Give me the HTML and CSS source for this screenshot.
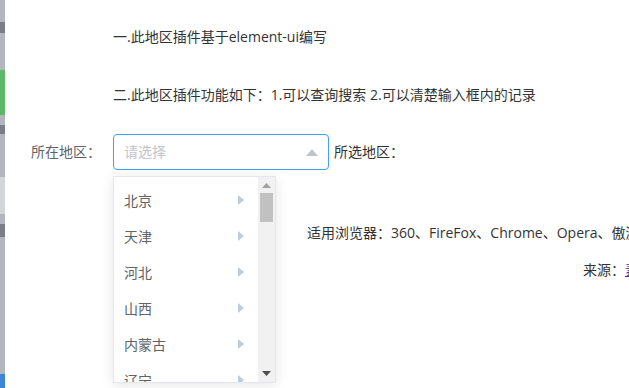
FILE: index.html
```html
<!DOCTYPE html>
<html lang="zh-CN">
<head>
<meta charset="utf-8">
<title>地区选择</title>
<link rel="stylesheet" href="styles.css">
</head>
<body>
<div class="screen">
  <div class="strip">
    <div class="seg seg-gray s1"></div>
    <div class="seg seg-dark s2"></div>
    <div class="seg seg-gray s3"></div>
    <div class="seg seg-green s4"></div>
    <div class="seg seg-gray s5"></div>
    <div class="seg seg-dark s6"></div>
    <div class="seg seg-gray s7"></div>
    <div class="seg seg-light s8"></div>
    <div class="seg seg-gray s9"></div>
    <div class="seg seg-dark s10"></div>
    <div class="seg seg-gray s11"></div>
    <div class="seg seg-blue s12"></div>
  </div>
  <main class="page">
    <p class="intro intro-first">一.此地区插件基于element-ui编写</p>
    <p class="intro intro-second">二.此地区插件功能如下：1.可以查询搜索 2.可以清楚输入框内的记录</p>
    <div class="form-row">
      <label class="label">所在地区：</label>
      <div class="select">
        <div class="input">
          <span class="placeholder">请选择</span>
          <svg class="caret-top" width="12" height="7" viewBox="0 0 12 7"><path d="M0 7 L6 0 L12 7 Z" fill="#c0c4cc"/></svg>
        </div>
        <div class="dropdown">
          <ul class="menu">
            <li class="item"><span>北京</span><svg class="caret-right" width="6" height="10" viewBox="0 0 6 10"><path d="M0 0 L6 5 L0 10 Z" fill="#c0ccda"/></svg></li>
            <li class="item"><span>天津</span><svg class="caret-right" width="6" height="10" viewBox="0 0 6 10"><path d="M0 0 L6 5 L0 10 Z" fill="#c0ccda"/></svg></li>
            <li class="item"><span>河北</span><svg class="caret-right" width="6" height="10" viewBox="0 0 6 10"><path d="M0 0 L6 5 L0 10 Z" fill="#c0ccda"/></svg></li>
            <li class="item"><span>山西</span><svg class="caret-right" width="6" height="10" viewBox="0 0 6 10"><path d="M0 0 L6 5 L0 10 Z" fill="#c0ccda"/></svg></li>
            <li class="item"><span>内蒙古</span><svg class="caret-right" width="6" height="10" viewBox="0 0 6 10"><path d="M0 0 L6 5 L0 10 Z" fill="#c0ccda"/></svg></li>
            <li class="item"><span>辽宁</span><svg class="caret-right" width="6" height="10" viewBox="0 0 6 10"><path d="M0 0 L6 5 L0 10 Z" fill="#c0ccda"/></svg></li>
          </ul>
          <div class="scrollbar">
            <svg class="sb-arrow" width="9" height="5" viewBox="0 0 9 5"><path d="M0 5 L4.5 0 L9 5 Z" fill="#a3a3a3"/></svg>
            <div class="sb-thumb"></div>
            <div class="sb-space"></div>
            <svg class="sb-arrow" width="9" height="5" viewBox="0 0 9 5"><path d="M0 0 L4.5 5 L9 0 Z" fill="#505050"/></svg>
          </div>
        </div>
      </div>
      <span class="chosen">所选地区：</span>
    </div>
    <p class="browsers">适用浏览器：360、FireFox、Chrome、Opera、傲游、搜狗、世界之窗. 不支持Safari、IE8及以下浏览器。</p>
    <p class="source">来源：<a class="source-link" href="#">素材家园</a></p>
  </main>
</div>
</body>
</html>
```

FILE: styles.css
```css
* { box-sizing: border-box; }

html, body {
  margin: 0;
  padding: 0;
  width: 629px;
  height: 388px;
  overflow: hidden;
  background: #ffffff;
}

body {
  font-family: "Open Sans", "Noto Sans CJK SC", sans-serif;
  font-size: 14px;
  color: #333333;
}

.screen {
  display: flex;
  height: 388px;
}

.strip {
  width: 5px;
  flex: none;
  display: flex;
  flex-direction: column;
  background: #b3b7bb;
}

.seg { flex: none; }
.seg-gray { background: #b3b7bb; }
.seg-dark { background: #7b7f85; }
.seg-green { background: #5fb868; }
.seg-light { background: #d3d6d9; }
.seg-blue { background: #3d86d6; }
.s1 { height: 22px; }
.s2 { height: 11px; }
.s3 { height: 37px; }
.s4 { height: 45px; }
.s5 { height: 10px; }
.s6 { height: 9px; }
.s7 { height: 43px; }
.s8 { height: 37px; }
.s9 { height: 10px; }
.s10 { height: 13px; }
.s11 { height: 137px; }
.s12 { height: 14px; }

.page {
  flex: 1;
  min-width: 0;
  position: relative;
}

p { margin: 0; }

.intro {
  line-height: 20px;
  padding-left: 108px;
  white-space: nowrap;
}

.intro-first { margin-top: 27px; }
.intro-second { margin-top: 38px; }

.form-row {
  display: flex;
  align-items: center;
  margin-top: 29px;
  height: 36px;
}

.label {
  width: 82px;
  margin-left: 26px;
  color: #606266;
  line-height: 20px;
}

.select {
  position: relative;
  width: 216px;
  height: 36px;
}

.input {
  height: 36px;
  border: 1px solid #409eff;
  border-radius: 4px;
  display: flex;
  align-items: center;
  justify-content: space-between;
  padding: 0 10px 0 10px;
}

.placeholder {
  color: #c0c4cc;
  line-height: 20px;
}

.caret-top { display: block; margin-top: 1px; }

.chosen {
  margin-left: 5px;
  line-height: 20px;
  color: #333333;
}

.dropdown {
  position: absolute;
  top: 42px;
  left: 0;
  width: 163px;
  height: 207px;
  border: 1px solid #e4e7ed;
  background: #ffffff;
  box-shadow: 0 2px 12px rgba(0, 0, 0, 0.1);
  display: flex;
  overflow: hidden;
  z-index: 5;
}

.menu {
  list-style: none;
  margin: 0;
  padding: 5px 0 0 0;
  flex: 1;
  min-width: 0;
}

.item {
  height: 36px;
  display: flex;
  align-items: center;
  justify-content: space-between;
  padding: 0 14px 0 10px;
  color: #606266;
}

.caret-right { display: block; }

.scrollbar {
  width: 17px;
  flex: none;
  background: #f1f1f1;
  display: flex;
  flex-direction: column;
  align-items: center;
  padding: 6px 0 6px 0;
}

.sb-arrow { display: block; flex: none; }

.sb-thumb {
  width: 13px;
  height: 29px;
  margin-top: 5px;
  background: #c1c1c1;
  flex: none;
}

.sb-space { flex: 1; }

.browsers {
  margin-top: 53px;
  padding-left: 302px;
  line-height: 20px;
  white-space: nowrap;
}

.source {
  margin-top: 17px;
  padding-left: 578px;
  line-height: 20px;
  white-space: nowrap;
}

.source-link {
  color: #551a8b;
  text-decoration: underline;
}
```
